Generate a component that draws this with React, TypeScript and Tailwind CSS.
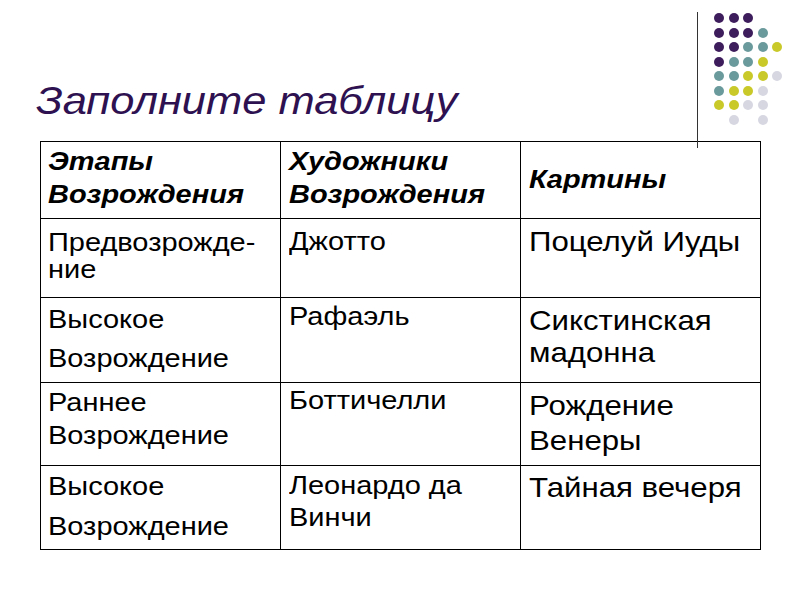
import React from "react";

const P = "bg-[#3e1d5c]";
const T = "bg-[#6a9a9c]";
const Y = "bg-[#c9c92a]";
const G = "bg-[#d7d7e2]";

const dotRows: (string | null)[][] = [
  [P, P, P, null, null],
  [P, P, P, T, null],
  [P, P, T, T, Y],
  [P, T, T, Y, null],
  [T, T, Y, Y, G],
  [T, Y, Y, G, null],
  [Y, Y, G, G, null],
  [null, G, null, G, null],
];

type Cell = { lines: string[]; cls: string };

const rows: { h: string; cells: Cell[] }[] = [
  {
    h: "h-[79px]",
    cells: [
      { lines: ["Предвозрожде-", "ние"], cls: "text-[26px] leading-[27px] pt-[10px]" },
      { lines: ["Джотто"], cls: "text-[26px] leading-[27px] pt-[9px]" },
      { lines: ["Поцелуй Иуды"], cls: "text-[28px] leading-[32px] pt-[7px]" },
    ],
  },
  {
    h: "h-[85px]",
    cells: [
      { lines: ["Высокое", "Возрождение"], cls: "text-[26px] leading-[39px] pt-[2px]" },
      { lines: ["Рафаэль"], cls: "text-[26px] leading-[32px] pt-[2px]" },
      { lines: ["Сикстинская", "мадонна"], cls: "text-[28px] leading-[32px] pt-[7px]" },
    ],
  },
  {
    h: "h-[83px]",
    cells: [
      { lines: ["Раннее", "Возрождение"], cls: "text-[26px] leading-[33px] pt-[3px]" },
      { lines: ["Боттичелли"], cls: "text-[26px] leading-[33px] pt-[1px]" },
      { lines: ["Рождение", "Венеры"], cls: "text-[28px] leading-[35px] pt-[5px]" },
    ],
  },
  {
    h: "h-[84px]",
    cells: [
      { lines: ["Высокое", "Возрождение"], cls: "text-[26px] leading-[40px] pt-0" },
      { lines: ["Леонардо да", "Винчи"], cls: "text-[26px] leading-[32px] pt-[3px]" },
      { lines: ["Тайная вечеря"], cls: "text-[28px] leading-[32px] pt-[6px]" },
    ],
  },
];

function Line({ children }: { children: React.ReactNode }) {
  return <div className="whitespace-nowrap origin-left scale-x-[1.114]">{children}</div>;
}

export default function App() {
  return (
    <div
      className="relative w-[800px] h-[600px] bg-white overflow-hidden text-black"
      style={{ fontFamily: '"Liberation Sans", Arial, sans-serif' }}
    >
      {/* decorative vertical line */}
      <div className="absolute left-[697px] top-[12px] w-px h-[136px] bg-[#333]" />
      {/* decorative dots */}
      <div className="absolute left-[714px] top-[13px] grid grid-cols-[10px_10px_10px_10px_10px] gap-[4.5px]">
        {dotRows.flatMap((r, i) =>
          r.map((c, j) => (
            <div key={`${i}-${j}`} className={`w-[10px] h-[10px] rounded-full ${c ?? ""}`} />
          ))
        )}
      </div>

      <div className="pt-[81px] pl-[36px]">
        <h1 className="italic text-[39px] leading-[39px] text-[#2e1150] font-normal whitespace-nowrap origin-left scale-x-[1.114]">
          Заполните таблицу
        </h1>
      </div>

      <div className="ml-[40px] mt-[21px] w-[721px] border-l border-t border-black">
        <div className="flex h-[77px] font-bold italic text-[26px] leading-[33px]">
          <div className="w-[240px] border-r border-b border-black pl-[7px] pt-[3px]">
            <Line>Этапы</Line>
            <Line>Возрождения</Line>
          </div>
          <div className="w-[240px] border-r border-b border-black pl-[8px] pt-[3px]">
            <Line>Художники</Line>
            <Line>Возрождения</Line>
          </div>
          <div className="w-[240px] border-r border-b border-black pl-[8px] pt-[21px]">
            <Line>Картины</Line>
          </div>
        </div>
        {rows.map((r, i) => (
          <div key={i} className={`flex ${r.h}`}>
            {r.cells.map((c, j) => (
              <div
                key={j}
                className={`w-[240px] border-r border-b border-black ${j === 0 ? "pl-[7px]" : "pl-[8px]"} ${c.cls}`}
              >
                {c.lines.map((l, k) => (
                  <Line key={k}>{l}</Line>
                ))}
              </div>
            ))}
          </div>
        ))}
      </div>
    </div>
  );
}
